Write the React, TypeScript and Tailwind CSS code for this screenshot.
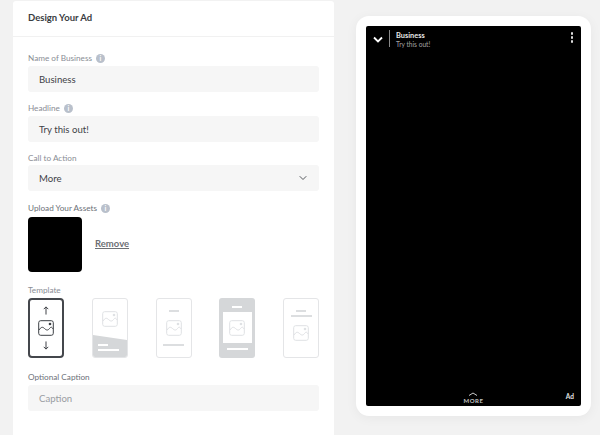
import React from 'react';
import { ChevronDown } from 'lucide-react';

const InfoDot: React.FC = () => (
  <span className="ml-1 flex h-[9px] w-[9px] items-center justify-center rounded-full bg-[#b9c0cb] text-[7px] font-bold leading-none text-white">i</span>
);

const Label: React.FC<{ text: string; info?: boolean; dark?: boolean }> = ({ text, info, dark }) => (
  <div className={`flex h-[12px] items-center text-[8.2px] leading-none ${dark ? 'text-[#6d7178]' : 'text-[#8a8e95]'}`}>
    {text}
    {info && <InfoDot />}
  </div>
);

const Field: React.FC<{ value: string; muted?: boolean; children?: React.ReactNode }> = ({ value, muted, children }) => (
  <div className={`flex h-[26px] items-center justify-between rounded-[3px] bg-[#f6f6f6] pl-[11px] pr-[10px] text-[9.6px] ${muted ? 'text-[#9a9da2]' : 'text-[#3f4247]'}`}>
    <span className="pt-[2px]">{value}</span>
    {children}
  </div>
);

const ImageGlyph: React.FC<{ color?: string }> = ({ color = '#dfe1e4' }) => (
  <svg viewBox="0 0 16 16" className="h-4 w-4" fill="none" stroke={color} strokeWidth="1">
    <rect x="0.7" y="0.7" width="14.6" height="14.6" rx="2" />
    <path d="M1 10c2-3 3.500-3.500 5.500-1.500S10 10.500 11.500 8.500 14 7 15 9" />
    <circle cx="12" cy="4" r="1.300" fill={color} stroke="none" />
  </svg>
);

const Bar: React.FC<{ w: string; light?: boolean }> = ({ w, light }) => (
  <div className={`h-[2px] ${w} ${light ? 'bg-white' : 'bg-[#dcdee0]'}`} />
);

const Templates: React.FC = () => (
  <div className="mt-[2px] flex justify-between">
    <div className="flex h-[60px] w-[36px] flex-col items-center justify-center gap-[5px] rounded-[4px] border-2 border-[#44474c] bg-white">
      <svg viewBox="0 0 8 10" className="h-[9px] w-2" fill="none" stroke="#3d4045" strokeWidth="1.100"><path d="M4 9.500V1M1.500 3.500 4 1l2.500 2.500" /></svg>
      <ImageGlyph color="#3d4045" />
      <svg viewBox="0 0 8 10" className="h-[9px] w-2" fill="none" stroke="#3d4045" strokeWidth="1.100"><path d="M4 .5V9M1.500 6.500 4 9l2.500-2.500" /></svg>
    </div>

    <div className="relative h-[60px] w-[36px] overflow-hidden rounded-[3px] border border-[#e4e5e7] bg-white">
      <div className="flex justify-center pt-[12px]"><ImageGlyph /></div>
      <svg viewBox="0 0 36 22" className="absolute bottom-0 left-0 h-[22px] w-full" preserveAspectRatio="none"><path d="M0 0 36 5V22H0Z" fill="#d5d7d9" /></svg>
      <div className="absolute bottom-[6px] left-[5px] flex flex-col gap-[3px]">
        <Bar w="w-[10px]" light />
        <Bar w="w-[21px]" light />
      </div>
    </div>

    <div className="flex h-[60px] w-[36px] flex-col items-center rounded-[3px] border border-[#e4e5e7] bg-white pt-[11px]">
      <Bar w="w-[10px]" />
      <div className="mt-[8px]"><ImageGlyph /></div>
      <div className="mt-[8px]"><Bar w="w-[21px]" /></div>
    </div>

    <div className="flex h-[60px] w-[36px] flex-col items-center rounded-[3px] bg-[#d5d7d9] pt-[8px]">
      <Bar w="w-[10px]" light />
      <div className="mt-[4px] flex h-[31px] w-[29px] items-center justify-center bg-white"><ImageGlyph /></div>
      <div className="mt-[5px]"><Bar w="w-[21px]" light /></div>
    </div>

    <div className="flex h-[60px] w-[36px] flex-col items-center rounded-[3px] border border-[#e4e5e7] bg-white pt-[11px]">
      <Bar w="w-[10px]" />
      <div className="mt-[3px]"><Bar w="w-[21px]" /></div>
      <div className="mt-[8px]"><ImageGlyph /></div>
    </div>
  </div>
);

const PhonePreview: React.FC = () => (
  <div className="mt-[16px] ml-[22px] h-[400px] w-[235px] rounded-[13px] bg-white p-[10px] shadow-[0_2px_12px_rgba(0,0,0,0.05)]">
    <div className="relative flex h-[380px] flex-col justify-between rounded-[2px] bg-black px-[7px] pt-[5px] pb-[2px] text-white">
      <div className="flex items-start">
        <svg viewBox="0 0 10 7" className="mt-[5px] h-[7px] w-[10px]" fill="none" stroke="white" strokeWidth="1.800"><path d="M1 1.500 5 5.500 9 1.500" /></svg>
        <div className="ml-[6px] mr-[6px] -mt-[1px] h-[17px] w-px bg-[#8a8a8a]" />
        <div className="flex-1">
          <div className="text-[7.400px] font-bold leading-[9px] text-[#e8e8e8]">Business</div>
          <div className="text-[6.600px] leading-[8px] text-[#a5a5a5]">Try this out!</div>
        </div>
        <div className="mt-[1px] mr-[1px] flex flex-col gap-[1.500px]">
          <div className="h-[2.500px] w-[2.500px] rounded-full bg-[#dddddd]" />
          <div className="h-[2.500px] w-[2.500px] rounded-full bg-[#dddddd]" />
          <div className="h-[2.500px] w-[2.500px] rounded-full bg-[#dddddd]" />
        </div>
      </div>
      <div className="relative flex items-end justify-center">
        <div className="flex flex-col items-center">
          <svg viewBox="0 0 10 4" className="h-[4px] w-[10px]" fill="none" stroke="#c9c9c9" strokeWidth="1"><path d="M1 3.500 5 1 9 3.500" /></svg>
          <div className="mt-[1px] text-[6px] font-bold leading-[7px] tracking-[0.5px] text-[#c4c4c4]">MORE</div>
        </div>
        <div className="absolute bottom-[3px] right-0 text-[6.500px] font-bold leading-[8px] text-[#e2e2e2]">Ad</div>
      </div>
    </div>
  </div>
);

const App: React.FC = () => (
  <div className="flex h-[435px] w-[600px] overflow-hidden bg-[#f2f2f2] font-['Lato','Noto_Sans',sans-serif]">
    <div className="mt-px ml-[13px] h-[434px] w-[321px] rounded-t-[3px] bg-white">
      <div className="flex h-[36px] items-center border-b border-[#f1f1f1] pl-[15px] text-[9.500px] font-bold text-[#3a3d42]">
        Design Your Ad
      </div>
      <div className="flex flex-col px-[15px] pt-[15px]">
        <Label text="Name of Business" info />
        <div className="mt-[2px]"><Field value="Business" /></div>
        <div className="mt-[10px]"><Label text="Headline" info /></div>
        <div className="mt-[2px]"><Field value="Try this out!" /></div>
        <div className="mt-[10px]"><Label text="Call to Action" /></div>
        <div className="mt-px">
          <Field value="More">
            <ChevronDown className="h-3 w-3 text-[#55585d]" strokeWidth={2} />
          </Field>
        </div>
        <div className="mt-[11px]"><Label text="Upload Your Assets" info dark /></div>
        <div className="mt-[3px] flex items-center">
          <div className="h-[55px] w-[54px] rounded-[4px] bg-black" />
          <span className="ml-[13px] text-[9.500px] font-bold text-[#6d7075] underline">Remove</span>
        </div>
        <div className="mt-[12px]"><Label text="Template" /></div>
        <Templates />
        <div className="mt-[13px]"><Label text="Optional Caption" dark /></div>
        <div className="mt-[2px]"><Field value="Caption" muted /></div>
      </div>
    </div>
    <PhonePreview />
  </div>
);

export default App;
